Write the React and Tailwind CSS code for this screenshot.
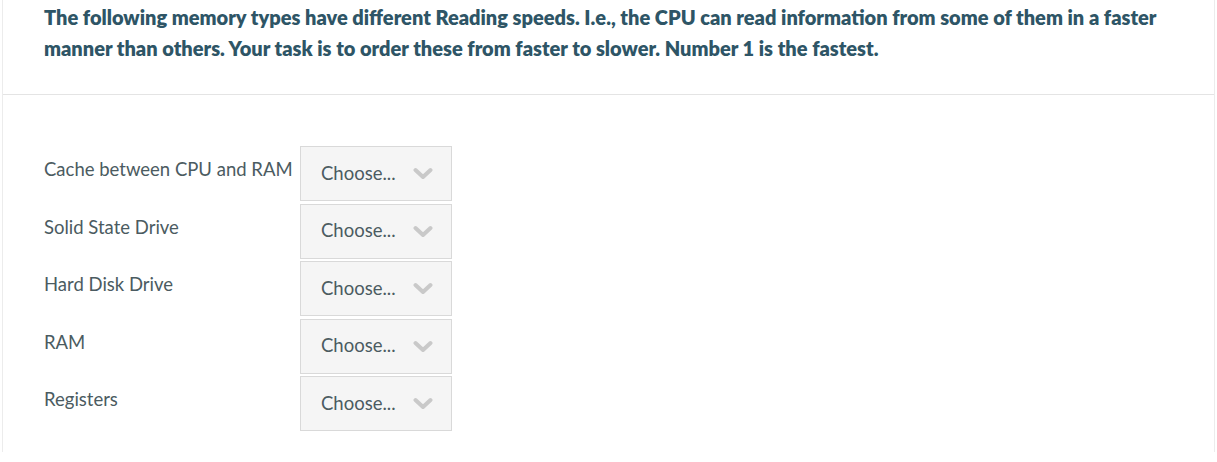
import React from 'react';

const items = ['Cache between CPU and RAM', 'Solid State Drive', 'Hard Disk Drive', 'RAM', 'Registers'];

const Chevron = () => (
  <svg width="20" height="13" viewBox="0 0 20 13" className="shrink-0">
    <path d="M2.5 3 L10 10 L17.5 3" fill="none" stroke="#c9c9c9" strokeWidth="4" strokeLinecap="round" strokeLinejoin="round" />
  </svg>
);

const App = () => {
  return (
    <div className="bg-white w-[1217px] h-[462px] overflow-hidden" style={{ fontFamily: 'Lato, "Open Sans", sans-serif' }}>
      <div className="ml-[2px] w-[1213px] border-l border-r border-[#ececec] h-[452px]">
        <div className="h-[95px] border-b border-[#e4e4e4] pl-[41px] pr-[40px] pt-[2px]">
          <p className="text-[20px] leading-[31px] font-extrabold text-[#2e5566]">
            The following memory types have different Reading speeds. I.e., the CPU can read information from some of them in a faster manner than others. Your task is to order these from faster to slower. Number 1 is the fastest.
          </p>
        </div>
        <div className="pt-[51px] pl-[41px] flex flex-col gap-[2.5px]">
          {items.map(item => (
            <div key={item} className="flex items-start">
              <div className="w-[256px] pt-[12px] text-[18.5px] leading-[22px] text-[#4b5b61] whitespace-nowrap">{item}</div>
              <div className="w-[152px] h-[55px] bg-[#f5f5f5] border border-[#d9d9d9] flex items-center pl-[20px] pr-[18px] justify-between">
                <span className="text-[18.5px] text-[#4b5b61]">Choose...</span>
                <Chevron />
              </div>
            </div>
          ))}
        </div>
      </div>
    </div>
  );
};

export default App;
